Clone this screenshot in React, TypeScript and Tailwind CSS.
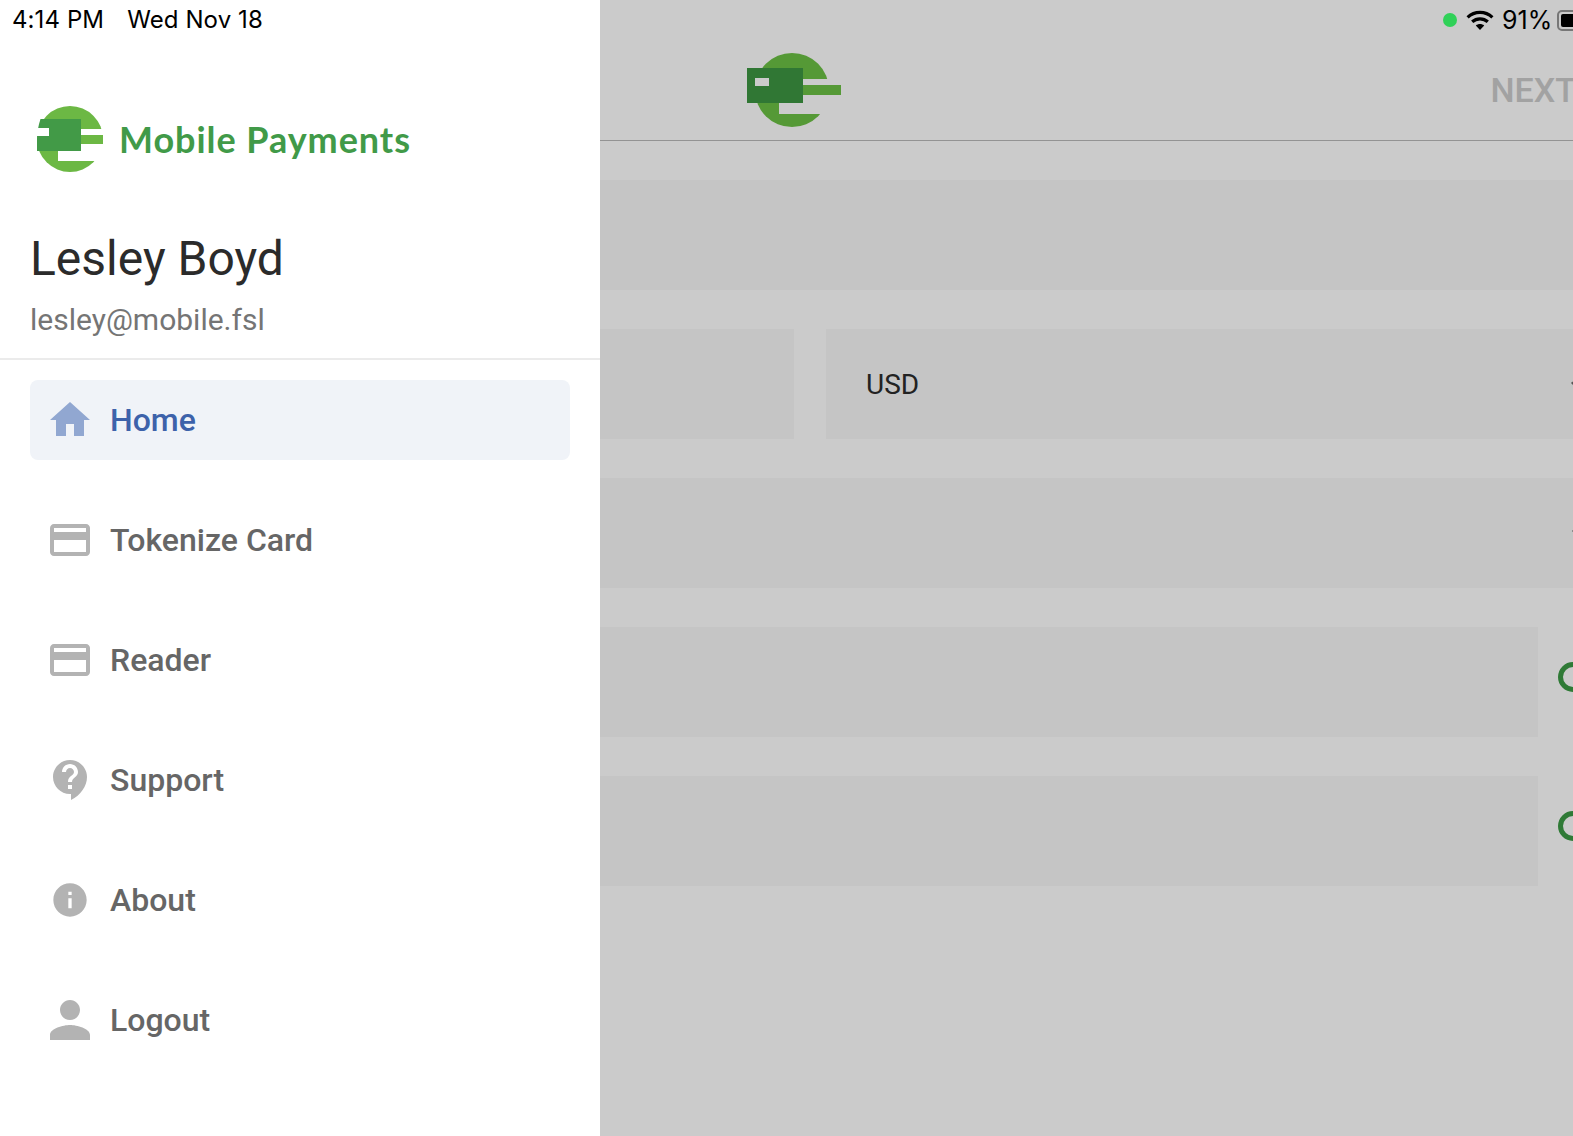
import { MdContactSupport, MdCreditCard, MdExpandMore, MdHome, MdInfo, MdPerson } from 'react-icons/md';
import type { ReactNode } from 'react';

const navItems: { label: string; icon: ReactNode; active?: boolean }[] = [
  { label: 'Home', icon: <MdHome className="size-12 shrink-0 text-[#91a7d1]" />, active: true },
  { label: 'Tokenize Card', icon: <MdCreditCard className="size-12 shrink-0 text-[#b3b3b3]" /> },
  { label: 'Reader', icon: <MdCreditCard className="size-12 shrink-0 text-[#b3b3b3]" /> },
  { label: 'Support', icon: <MdContactSupport className="ml-[2px] size-12 shrink-0 text-[#b3b3b3]" /> },
  { label: 'About', icon: <MdInfo className="size-10 shrink-0 text-[#b3b3b3]" /> },
  { label: 'Logout', icon: <MdPerson className="size-[60px] shrink-0 text-[#b3b3b3]" /> },
];

function SidebarLogo() {
  return (
    <svg width="68" height="68" viewBox="0 0 68 68" className="shrink-0">
      <circle cx="33" cy="33" r="33" fill="#6cb844" />
      <rect x="44" y="23" width="24" height="32" fill="#fff" />
      <rect x="21" y="45" width="30" height="10" fill="#fff" />
      <path d="M3.5 13H44V45H0V33C0 26 1.5 19 3.5 13Z" fill="#429a47" />
      <rect x="0" y="22" width="12" height="8" fill="#fff" />
      <rect x="44" y="29" width="22" height="9" fill="#6cb844" />
    </svg>
  );
}

function HeaderLogo() {
  return (
    <svg width="96" height="76" viewBox="0 0 96 76" className="shrink-0">
      <circle cx="45" cy="38" r="37" fill="#559936" />
      <rect x="56" y="27" width="40" height="35" fill="#cbcbcb" />
      <rect x="32" y="51" width="30" height="11" fill="#cbcbcb" />
      <rect x="56" y="33" width="38" height="10" fill="#559936" />
      <rect x="0" y="16" width="56" height="35" fill="#307734" />
      <rect x="8" y="26" width="14" height="8" fill="#cbcbcb" />
    </svg>
  );
}

function WifiGlyph() {
  return (
    <svg width="28" height="20" viewBox="0 0 28 20" fill="none" stroke="#000" strokeWidth="3.2">
      <path d="M1.6 7.4C8.6 0.8 19.4 0.8 26.4 7.4" />
      <path d="M6.2 11.8C10.6 7.8 17.4 7.8 21.8 11.8" />
      <path d="M14 20L9.8 15.4C12.2 13.4 15.8 13.4 18.2 15.4Z" fill="#000" stroke="none" />
    </svg>
  );
}

function RadioRow() {
  return (
    <div className="flex items-center gap-5">
      <div className="h-[110px] w-[938px] shrink-0 bg-[#c5c5c5]" />
      <div className="mb-[10px] size-[30px] shrink-0 rounded-full border-[5px] border-[#2f7a36]" />
    </div>
  );
}

export default function App() {
  return (
    <div className="flex h-[1136px] w-full overflow-hidden bg-white [font-family:Roboto,sans-serif]">
      <aside className="flex w-[600px] shrink-0 flex-col bg-white">
        <div className="h-10 pl-3 pt-[6px] text-[24px] leading-7 tracking-[0.1px] text-black [font-family:Inter,sans-serif]">
          <span>4:14 PM</span>
          <span className="ml-[23px]">Wed Nov 18</span>
        </div>
        <div className="flex items-center gap-[14px] pl-[37px] pt-[66px]">
          <SidebarLogo />
          <span className="-mt-[3px] text-[36px] leading-[44px] font-bold tracking-[0.95px] text-[#419a48] [font-family:Lato,sans-serif]">
            Mobile Payments
          </span>
        </div>
        <div className="pl-[30px] pt-[57px] text-[48px] leading-[56px] text-[#2b2b2b]">Lesley Boyd</div>
        <div className="pl-[30px] pt-[15px] text-[30px] leading-[36px] text-[#757575]">lesley@mobile.fsl</div>
        <div className="mt-[20px] h-[2px] bg-[#ebebeb]" />
        <nav className="flex flex-col gap-10 px-[30px] pt-5">
          {navItems.map((item) => (
            <div
              key={item.label}
              className={`flex h-20 items-center rounded-lg pl-4 ${item.active ? 'bg-[#f0f3f8]' : ''}`}
            >
              <div className="flex size-12 shrink-0 items-center justify-center">{item.icon}</div>
              <span
                className={`ml-4 text-[32px] font-medium ${item.active ? 'text-[#3d62aa]' : 'text-[#666666]'}`}
              >
                {item.label}
              </span>
            </div>
          ))}
        </nav>
      </aside>

      <main className="relative min-w-0 flex-1 overflow-hidden bg-[#cbcbcb]">
        <header className="flex h-[141px] w-[973px] items-start border-b border-[#939393] pl-[147px]">
          <div className="pt-[52px]">
            <HeaderLogo />
          </div>
          <span className="ml-auto -mr-[3px] pt-[70px] text-[34px] leading-10 font-medium text-[#a2a2a2]">NEXT</span>
        </header>

        <div className="flex w-[1100px] flex-col gap-[39px] pt-[39px]">
          <div className="h-[110px] bg-[#c5c5c5]" />
          <div className="flex gap-[32px]">
            <div className="h-[110px] w-[194px] shrink-0 bg-[#c5c5c5]" />
            <div className="flex h-[110px] flex-1 items-center bg-[#c5c5c5] pl-10 pt-[2px] text-[28px] text-[#222222]">
              <span>USD</span>
              <MdExpandMore className="ml-[646px] size-6 shrink-0 text-[#555555]" />
            </div>
          </div>
          <div className="flex h-[110px] items-center bg-[#c5c5c5] pl-[966px]">
            <MdExpandMore className="size-6 shrink-0 text-[#555555]" />
          </div>
          <RadioRow />
          <RadioRow />
        </div>

        <div className="absolute top-[6px] left-[843px] flex items-center">
          <div className="size-[14px] rounded-full bg-[#30d158]" />
          <div className="ml-[9px]">
            <WifiGlyph />
          </div>
          <span className="ml-[8px] text-[25px] leading-7 text-black [font-family:Inter,sans-serif]">91%</span>
          <div className="ml-[5px] h-[21px] w-10 shrink-0 rounded-[5px] border-2 border-[#777777] p-[2px]">
            <div className="h-full w-full rounded-[2px] bg-black" />
          </div>
        </div>
      </main>
    </div>
  );
}
